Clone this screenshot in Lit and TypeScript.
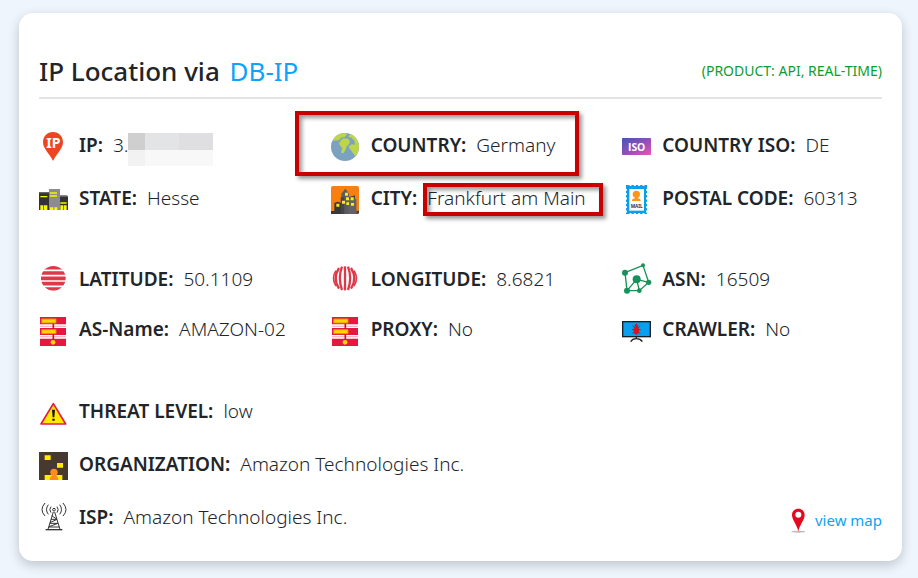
import { LitElement, html, svg, css, nothing, TemplateResult } from "lit";
import { customElement } from "lit/decorators.js";
import { classMap } from "lit/directives/class-map.js";

interface Field {
  label: string;
  value: string;
  icon: string;
  mark?: "field" | "value";
  masked?: boolean;
}

const serverIcon = svg`
  <path fill="#e8173f" d="M3 3H81V25H3zM3 36H81V57H3zM3 68H81V90H3z"/>
  <path fill="#f3a3b4" d="M3 29H81V32H3zM3 61H81V64H3z"/>
  <path stroke="#c4122f" stroke-width="5" d="M43 22V41M43 54V74"/>
  <path fill="#ffd500" stroke="#e08a10" stroke-width="3" d="M8 9H51V21H8zM8 41H51V53H8z"/>
  <circle cx="42" cy="79" r="7" fill="#ffd500"/>`;

const icons: Record<string, TemplateResult> = {
  ip: svg`
    <path fill="#ef4420" d="M42 0C24 0 12 13 12 31C12 50 30 63 42 87C54 63 72 50 72 31C72 13 60 0 42 0z"/>
    <text class="ip-text" x="43" y="47" text-anchor="middle">IP</text>`,
  state: svg`
    <path fill="#333" d="M0 24H32V75H0zM61 34H87V75H61z"/>
    <path fill="#666" d="M0 21H30V25H0zM63 31H85V35H63z"/>
    <path fill="#8c8c8c" d="M30 12H63V75H30z"/>
    <path fill="#f6f800" d="M4 33H25V37H4zM4 61H12V75H4zM14 61H25V75H14zM33 22H54V26H33zM33 31H54V35H33zM33 67H43V75H33zM46 67H55V75H46zM64 52H83V56H64zM64 61H72V75H64zM74 61H83V75H74z"/>`,
  globe: svg`
    <circle cx="42" cy="45" r="42" fill="#7ba2c1"/>
    <path fill="#bcd54a" d="M6 24C12 11 27 3 42 3L48 8L41 15L30 17L24 25L6 26z"/>
    <path fill="#bcd54a" d="M58 6C76 14 84 29 84 45C84 57 79 67 73 73L52 44L62 37L72 38L70 26L62 18L52 14z"/>
    <path fill="#bcd54a" d="M30 24L38 19L52 20L56 27L55 35L47 43L43 55L37 64L30 62L34 48L28 42L24 34z"/>`,
  city: svg`
    <rect y="3" width="84" height="84" rx="5" fill="#f97f0f"/>
    <path fill="#383838" d="M10 87V54L20 50L31 54V87zM0 78H10V87H0z"/>
    <path fill="#5c5c60" d="M31 87V26L43 11L54 26V87z"/>
    <path fill="#44464a" d="M29 87V37H40V87zM54 36L72 31V87H54z"/>
    <path fill="#626268" d="M52 43L63 38L76 43V87H52z"/>
    <path fill="#444" d="M76 77H84V84L80 87H76z"/>
    <path fill="#ffe81c" d="M16 56H25V65H16zM42 23H51V32H42zM33 47H42V56H33zM45 37H54V46H45zM46 52H54V60H46zM59 37H68V46H59zM60 54H69V62H60z"/>`,
  iso: svg`
    <defs><linearGradient id="iso" x1="0" y1="0" x2="1" y2="1"><stop stop-color="#4355b5"/><stop offset=".55" stop-color="#9650b5"/><stop offset="1" stop-color="#ed51b5"/></linearGradient></defs>
    <rect y="18" width="87" height="51" rx="2" fill="url(#iso)"/>
    <text class="iso-text" x="44" y="56" text-anchor="middle">ISO</text>`,
  stamp: svg`
    <path fill="#08a0e9" d="M12 0H75V87H12z"/>
    <path stroke="#fff" stroke-width="6" stroke-linecap="round" stroke-dasharray="1 12" d="M25 0H68M25 87H68M12 14V80M75 14V80"/>
    <path fill="#fff" d="M22 12H66V77H22z"/>
    <circle cx="43" cy="28" r="11" fill="#ff9419"/>
    <path fill="#ff9419" d="M39 35H47V40Q56 40 56 48H30Q30 40 39 40z"/>
    <text class="mail-text" x="44" y="69" text-anchor="middle">MAIL</text>`,
  latitude: svg`
    <defs><clipPath id="lat"><circle cx="43" cy="37" r="37"/></clipPath></defs>
    <path clip-path="url(#lat)" stroke="#df3848" stroke-width="11" d="M0 5H87M0 21H87M0 37H87M0 53H87M0 69H87"/>`,
  longitude: svg`
    <g fill="none" stroke="#df3848" stroke-width="7">
      <path d="M42 1V73"/>
      <path d="M33 2Q20 37 33 72M51 2Q64 37 51 72"/>
      <path d="M24 6Q4 37 24 68M60 6Q80 37 60 68"/>
      <path stroke-width="5" d="M15 14Q0 37 15 60M69 14Q84 37 69 60"/>
    </g>`,
  network: svg`
    <path fill="none" stroke="#18925a" stroke-width="4" d="M9 20L63-2L80 49L52 74H15zM44 40L15 74M44 40L52 74M44 40L80 49"/>
    <g fill="#18925a"><circle cx="9" cy="20" r="9"/><circle cx="63" cy="-2" r="6"/><circle cx="80" cy="49" r="8"/><circle cx="44" cy="40" r="12"/><circle cx="15" cy="74" r="9"/><circle cx="52" cy="74" r="7"/></g>`,
  server: serverIcon,
  crawler: svg`
    <rect x="2" y="17" width="83" height="45" fill="#0aa0f0" stroke="#15202a" stroke-width="4"/>
    <path fill="none" stroke="#222" stroke-width="4" d="M43 62V68M26 77Q31 68 43 68Q55 68 61 77"/>
    <path stroke="#222" stroke-width="2" d="M32 29L54 53M54 29L32 53M30 41H56"/>
    <ellipse cx="43" cy="43" rx="8" ry="13" fill="#e01020"/><circle cx="43" cy="28" r="5" fill="#e01020"/>`,
  warning: svg`
    <path fill="#ffe900" stroke="#e61b3f" stroke-width="5" stroke-linejoin="round" d="M43 17L80 78H6z"/>
    <path fill="#111" d="M39 35H48L46 58H41zM40 62H47V68H40z"/>`,
  organization: svg`
    <path fill="#48392f" d="M0 3H87V87H0z"/>
    <path fill="#ffec00" d="M17 13H35V27H17zM54 36H72V50H54zM17 72H70V87H17z"/>
    <circle cx="45" cy="64" r="11" fill="#ff8c1c"/>
    <path fill="#ff8c1c" d="M32 87Q32 73 45 73Q58 73 58 87z"/>`,
  tower: svg`
    <g fill="none" stroke="#333" stroke-width="3">
      <path d="M43 24L27 76M47 24L63 76M36 46H54M33 56L54 46M33 58H57M30 68L57 58M29 69H61M38 35L54 46"/>
      <path stroke-width="4" d="M20 77H70"/>
      <circle cx="45" cy="17" r="4"/>
      <path d="M36 26Q29 17 36 8M54 26Q61 17 54 8M28 31Q17 17 28 2M62 31Q73 17 62 2M18 36Q0 17 18-3M72 36Q90 17 72-3"/>
    </g>`,
};

const groups: Field[][] = [
  [
    { label: "IP:", value: "3.", icon: "ip", masked: true },
    { label: "COUNTRY:", value: "Germany", icon: "globe", mark: "field" },
    { label: "COUNTRY ISO:", value: "DE", icon: "iso" },
    { label: "STATE:", value: "Hesse", icon: "state" },
    { label: "CITY:", value: "Frankfurt am Main", icon: "city", mark: "value" },
    { label: "POSTAL CODE:", value: "60313", icon: "stamp" },
  ],
  [
    { label: "LATITUDE:", value: "50.1109", icon: "latitude" },
    { label: "LONGITUDE:", value: "8.6821", icon: "longitude" },
    { label: "ASN:", value: "16509", icon: "network" },
    { label: "AS-Name:", value: "AMAZON-02", icon: "server" },
    { label: "PROXY:", value: "No", icon: "server" },
    { label: "CRAWLER:", value: "No", icon: "crawler" },
  ],
];

const details: Field[] = [
  { label: "THREAT LEVEL:", value: "low", icon: "warning" },
  { label: "ORGANIZATION:", value: "Amazon Technologies Inc.", icon: "organization" },
  { label: "ISP:", value: "Amazon Technologies Inc.", icon: "tower" },
];

@customElement("app-root")
export class AppRoot extends LitElement {
  static styles = css`
    :host {
      display: block;
      box-sizing: border-box;
      min-height: 100vh;
      padding: 13px 16px 17px 19px;
      background: #eef5fd;
      color: #212529;
      font-family: "Segoe UI", "Noto Sans", "Open Sans", sans-serif;
      font-size: 19px;
      line-height: 26px;
    }
    .card {
      box-sizing: border-box;
      padding: 40px 20px 27px;
      background: #fff;
      border-radius: 14px;
      box-shadow: 0 4px 12px rgba(0, 0, 0, 0.2);
    }
    .head {
      display: flex;
      justify-content: space-between;
      align-items: center;
      padding-bottom: 8px;
      border-bottom: 2px solid #e3e3e3;
    }
    h1 {
      margin: 0;
      font-size: 26px;
      font-weight: 500;
      line-height: 36px;
    }
    a {
      color: #0da2fb;
      text-decoration: none;
    }
    h1 a {
      margin-left: 3px;
      font-weight: 400;
    }
    .product {
      color: #0b9e2f;
      font-size: 14px;
      line-height: 20px;
    }
    dl, dd { margin: 0; }
    .grid {
      display: grid;
      grid-template-columns: repeat(3, minmax(0, 1fr));
      gap: 23px 32px;
      margin-top: 33px;
    }
    .grid + .grid {
      row-gap: 20px;
      margin-top: 51px;
    }
    .details {
      display: flex;
      flex-direction: column;
      gap: 23px;
      margin-top: 52px;
    }
    .foot {
      display: flex;
      justify-content: space-between;
      align-items: flex-end;
    }
    .foot .details { flex: 1; }
    .field {
      position: relative;
      display: flex;
      align-items: flex-start;
      height: 30px;
      white-space: nowrap;
    }
    .icon {
      flex: none;
      width: 29px;
      height: 30px;
      margin-right: 11px;
      overflow: visible;
    }
    .label { font-weight: 600; }
    .value {
      position: relative;
      display: flex;
      margin-left: 10px;
      font-weight: 300;
    }
    .marked-field::after, .marked-value .value::after {
      content: "";
      position: absolute;
      box-sizing: border-box;
      border: 4px solid #c80000;
      box-shadow: 3px 3px 4px rgba(0, 0, 0, 0.4), inset 3px 3px 4px rgba(0, 0, 0, 0.4);
      pointer-events: none;
    }
    .marked-field::after { inset: -21px 11px -14px -36px; }
    .marked-value .value::after { inset: -2px -17px -5px -4px; }
    .mask {
      display: grid;
      grid-template: 17px 16px / 17px 34px 34px;
      margin-top: 1px;
    }
    .m1 { background: #cfcfd0; }
    .m2 { background: #e3e4e6; }
    .m3 { background: #dfdfe1; }
    .m4 { background: #f2f2f2; }
    .m5 { background: #f8f8f8; }
    .map {
      display: flex;
      align-items: center;
      gap: 9px;
      font-size: 15px;
      line-height: 28px;
    }
    .pin { width: 15px; height: 25px; }
    .ip-text { font: 700 42px "Noto Sans", sans-serif; fill: #fff; }
    .iso-text { font: 700 31px "Open Sans", sans-serif; fill: #fff; }
    .mail-text { font: 700 14px "Noto Sans", sans-serif; fill: #333; }
  `;

  private field(f: Field) {
    return html`<div class=${classMap({
      field: true,
      "marked-field": f.mark === "field",
      "marked-value": f.mark === "value",
    })}>
      <svg class="icon" viewBox="0 0 87 90" aria-hidden="true">${icons[f.icon]}</svg>
      <dt class="label">${f.label}</dt>
      <dd class="value">${f.value}${f.masked
        ? html`<span class="mask"><i class="m1"></i><i class="m2"></i><i class="m3"></i><i class="m4"></i><i class="m5"></i><i class="m5"></i></span>`
        : nothing}</dd>
    </div>`;
  }

  render() {
    return html`<main class="card">
      <header class="head">
        <h1>IP Location via <a href="#db-ip">DB-IP</a></h1>
        <span class="product">(PRODUCT: API, REAL-TIME)</span>
      </header>
      ${groups.map((g) => html`<dl class="grid">${g.map((f) => this.field(f))}</dl>`)}
      <div class="foot">
        <dl class="details">${details.map((f) => this.field(f))}</dl>
        <a class="map" href="#map">
          <svg class="pin" viewBox="0 0 45 75" aria-hidden="true">
            <ellipse cx="22" cy="71" rx="21" ry="3" fill="#bbb"/>
            <path fill="#e50920" fill-rule="evenodd" d="M22 2C11 2 3 10 3 21C3 35 16 47 22 70C28 47 41 35 41 21C41 10 33 2 22 2zM22 11A9 9 0 1 1 22 29A9 9 0 1 1 22 11z"/>
          </svg>view map</a>
      </div>
    </main>`;
  }
}
